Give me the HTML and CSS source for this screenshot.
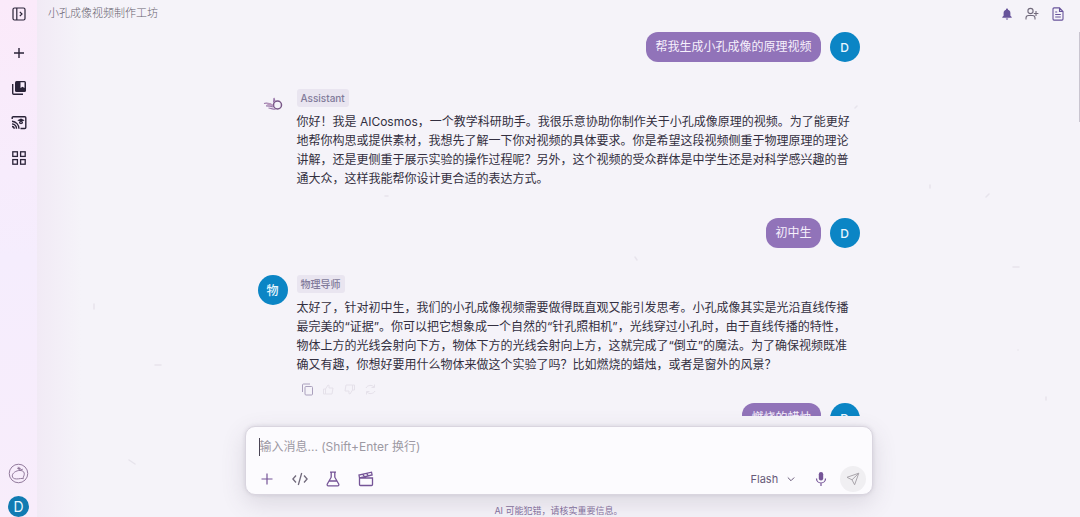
FILE: index.html
```html
<!DOCTYPE html>
<html lang="zh-CN">
<head>
<meta charset="utf-8">
<meta name="viewport" content="width=device-width, initial-scale=1">
<title>小孔成像视频制作工坊</title>
<link rel="stylesheet" href="styles.css">
</head>
<body>
<div class="app">
  <nav class="sidebar">
    <div class="sidebar-group">
      <button class="icon-btn" aria-label="展开侧栏"><svg width="14" height="14" viewBox="0 0 14 14" fill="none" stroke="currentColor" stroke-width="1.2"><rect x="1" y="1" width="12" height="12" rx="1.5"/><path d="M4.8 1v12M7.8 4.8 10 7 7.800 9.200"/></svg></button>
      <button class="icon-btn icon-btn--new" aria-label="新建"><svg width="14" height="14" viewBox="0 0 14 14" fill="none" stroke="currentColor" stroke-width="1.400"><path d="M7 2v10M2 7h10"/></svg></button>
      <button class="icon-btn" aria-label="资料库"><svg width="16" height="16" viewBox="0 0 16 16"><rect x="4" y="1" width="11" height="11" rx="1.5" fill="currentColor"/><path d="M9.500 2.200h4V8l-2-1.300-2 1.300z" fill="#f8edfc"/><path d="M1.700 4v9.300c0 .6.400 1 1 1H12" fill="none" stroke="currentColor" stroke-width="1.400"/></svg></button>
      <button class="icon-btn" aria-label="课堂"><svg width="16" height="16" viewBox="0 0 16 16" fill="none" stroke="currentColor" stroke-width="1.400"><path d="M1.200 4V2.700c0-.6.400-1 1-1h11.600c.6 0 1 .4 1 1v9.800c0 .6-.4 1-1 1H9.500M1 6.200a7.500 7.500 0 0 1 7 7.600M1 8.900a5 5 0 0 1 4.500 4.900M1 11.500a2.300 2.300 0 0 1 2.200 2.300"/><path d="m10 3.400 3.600 1.900L10 7.200 6.400 5.300zM8 6.800v1.400l2 1 2-1V6.800l-2 1z" fill="currentColor" stroke="none"/></svg></button>
      <button class="icon-btn" aria-label="应用"><svg width="14" height="14" viewBox="0 0 14 14" fill="none" stroke="currentColor" stroke-width="1.300"><rect x=".8" y=".8" width="4.600" height="4.600"/><rect x="8.600" y=".8" width="4.600" height="4.600"/><rect x=".8" y="8.600" width="4.600" height="4.600"/><rect x="8.600" y="8.600" width="4.600" height="4.600"/></svg></button>
    </div>
    <div class="sidebar-account">
      <button class="icon-btn icon-btn--mark" aria-label="AICosmos"><svg width="21" height="21" viewBox="0 0 22 22" fill="none" stroke="#8d7597" stroke-width="1"><circle cx="11" cy="11" r="9.700"/><path d="M4.500 13.500c0-3 4-5.700 8-5.700 3.500 0 5 2 4.500 4.500-.4 1.800-1.500 3-1 4.200-1.500-.8-4 .2-7 .2-3 0-4.500-1.200-4.500-3.200zM11.500 7.800l4-1.300M11.500 4v3.500M9.700 5.700h3.600M10.200 4.500l2.600 2.500"/></svg></button>
      <button class="avatar avatar--small" aria-label="账户">D</button>
    </div>
  </nav>

  <main class="main">
    <svg class="particles" width="100%" height="100%" fill="none" stroke="#e7e4ec" stroke-width="1.500" stroke-linecap="round" aria-hidden="true"><path d="m92 460 6 4M118 365h6M57 304v5M949 197l3-3M893 185v3M976 267h6M1009 397v3M981 350h.1M598 257l2 3M818 108l2-2M348 196h3"/></svg>
    <header class="topbar">
      <h1 class="title">小孔成像视频制作工坊</h1>
      <div class="topbar-actions">
        <button class="icon-btn" aria-label="通知"><svg width="12" height="12" viewBox="0 0 12 12" fill="currentColor"><path d="M6 .5c.6 0 1 .4 1 1v.3c1.500.4 2.400 1.600 2.400 3.200v2.800l1.300 1.300v.7H1.300v-.7l1.300-1.300V5c0-1.600.9-2.800 2.400-3.200v-.3c0-.6.4-1 1-1zM4.800 10.400h2.400a1.200 1.200 0 0 1-2.400 0z"/></svg></button>
        <button class="icon-btn icon-btn--grey" aria-label="邀请成员"><svg width="14" height="14" viewBox="0 0 14 14" fill="none" stroke="currentColor" stroke-width="1.100"><circle cx="5.500" cy="4" r="2.600"/><path d="M1 12.500V11c0-1.500 1.200-2.500 2.500-2.500h4C8.800 8.500 10 9.500 10 11v1.500M11 4v5M8.800 6.500h4.600"/></svg></button>
        <button class="icon-btn" aria-label="文档"><svg width="14" height="14" viewBox="0 0 14 14" fill="none" stroke="currentColor" stroke-width="1.100"><path d="M8.500.9H3a1 1 0 0 0-1 1v10.200a1 1 0 0 0 1 1h8a1 1 0 0 0 1-1V4.400zM8.500.9v3.500H12M4.200 5h2M4.200 7.500h5.600M4.200 10h5.600"/></svg></button>
      </div>
    </header>

    <section class="chat">
      <div class="thread">
        <article class="message message--user">
          <p class="bubble">帮我生成小孔成像的原理视频</p>
          <span class="avatar">D</span>
        </article>

        <article class="message message--bot">
          <span class="bot-mark"><svg width="20" height="14" viewBox="0 0 20 14" fill="none" stroke="#9a78aa"><circle cx="14.500" cy="8" r="4" stroke-width="1.500" stroke="#785787"/><path d="M1 6.500c3-1 5-.5 9 2M3 8.800c3 0 5 0 7 1.200M5.500 11c3 .5 5 1.500 7 1.200M10.500 5.500 11 1l1 3.500" stroke-width="1.200"/><path d="m2 6 6 .3 2.500 2.700-5-.5z" fill="#b899bd" stroke="none"/></svg></span>
          <div class="content">
            <span class="name">Assistant</span>
            <p class="text">你好！我是 AICosmos，一个教学科研助手。我很乐意协助你制作关于小孔成像原理的视频。为了能更好地帮你构思或提供素材，我想先了解一下你对视频的具体要求。你是希望这段视频侧重于物理原理的理论讲解，还是更侧重于展示实验的操作过程呢？另外，这个视频的受众群体是中学生还是对科学感兴趣的普通大众，这样我能帮你设计更合适的表达方式。</p>
          </div>
        </article>

        <article class="message message--user">
          <p class="bubble">初中生</p>
          <span class="avatar">D</span>
        </article>

        <article class="message message--bot message--rated">
          <span class="avatar">物</span>
          <div class="content">
            <span class="name">物理导师</span>
            <p class="text">太好了，针对初中生，我们的小孔成像视频需要做得既直观又能引发思考。小孔成像其实是光沿直线传播最完美的“证据”。你可以把它想象成一个自然的“针孔照相机”，光线穿过小孔时，由于直线传播的特性，物体上方的光线会射向下方，物体下方的光线会射向上方，这就完成了“倒立”的魔法。为了确保视频既准确又有趣，你想好要用什么物体来做这个实验了吗？比如燃烧的蜡烛，或者是窗外的风景？</p>
            <div class="feedback">
              <button class="icon-btn" aria-label="复制"><svg width="13" height="13" viewBox="0 0 13 13" fill="none" stroke="currentColor"><rect x="4" y="3.500" width="7.500" height="8.500" rx="1"/><path d="M1.500 9V2a1 1 0 0 1 1-1H9"/></svg></button>
              <button class="icon-btn icon-btn--faint" aria-label="赞"><svg width="13" height="13" viewBox="0 0 13 13" fill="none" stroke="currentColor"><path d="M1.500 6h2v5h-2zM3.500 6 6 2c1.200 0 1.300 1 1 3h4l-1 6H3.500"/></svg></button>
              <button class="icon-btn icon-btn--faint" aria-label="踩"><svg width="13" height="13" viewBox="0 0 13 13" fill="none" stroke="currentColor"><path d="M11.500 7h-2V2h2zM9.500 7 7 11c-1.200 0-1.300-1-1-3H2l1-6h6.500"/></svg></button>
              <button class="icon-btn icon-btn--faint" aria-label="重新生成"><svg width="13" height="13" viewBox="0 0 13 13" fill="none" stroke="currentColor"><path d="M2 5c1.500-3 6-3.500 8-1M10.500 1.500V4.500h-3M11 8c-1.500 3-6 3.500-8 1M2.500 11.500v-3h3"/></svg></button>
            </div>
          </div>
        </article>

        <article class="message message--user">
          <p class="bubble">燃烧的蜡烛</p>
          <span class="avatar">D</span>
        </article>
      </div>
      <span class="scroll-thumb"></span>
    </section>

    <footer class="dock">
      <form class="composer">
        <label class="field">
          <textarea class="input" rows="1" aria-label="消息" placeholder="输入消息... (Shift+Enter 换行)"></textarea>
        </label>
        <div class="tools">
          <div class="tool-group">
            <button type="button" class="icon-btn" aria-label="添加"><svg width="16" height="16" viewBox="0 0 16 16" fill="none" stroke="currentColor" stroke-width="1.200"><path d="M8 2.500v11M2.500 8h11"/></svg></button>
            <button type="button" class="icon-btn icon-btn--grey" aria-label="代码"><svg width="16" height="16" viewBox="0 0 16 16" fill="none" stroke="currentColor" stroke-width="1.300"><path d="M4 4.500.900 8 4 11.500M12 4.500 15.100 8 12 11.500M9.700 2 6.300 14"/></svg></button>
            <button type="button" class="icon-btn" aria-label="实验"><svg width="16" height="16" viewBox="0 0 16 16" fill="none" stroke="currentColor" stroke-width="1.300"><path d="M5 1.200h6M6.200 1.200v5L2.300 13c-.5.900 0 1.800 1 1.800h9.400c1 0 1.500-.9 1-1.800L9.800 6.200v-5M4.500 10h7"/></svg></button>
            <button type="button" class="icon-btn" aria-label="视频"><svg width="16" height="16" viewBox="0 0 16 16" fill="none" stroke="currentColor" stroke-width="1.300"><path d="M1.500 7h13v6.500a1 1 0 0 1-1 1h-11a1 1 0 0 1-1-1zM1.500 7 1 4l12.500-2.800.6 2.700L1.500 7M4.700 3.300l1.800 2.300M8.500 2.400l1.800 2.300"/></svg></button>
          </div>
          <div class="tool-group tool-group--end">
            <label class="model">
              <select class="model-select" aria-label="模型"><option>Flash</option></select>
              <svg width="8" height="8" viewBox="0 0 8 8" fill="none" stroke="currentColor"><path d="m.800 2.500 3.200 3.200 3.200-3.200"/></svg>
            </label>
            <button type="button" class="icon-btn" aria-label="语音"><svg width="14" height="16" viewBox="0 0 14 16" fill="none" stroke="currentColor" stroke-width="1.200"><rect x="4.800" y="1" width="4.400" height="8.500" rx="2.200" fill="currentColor" stroke="none"/><path d="M2.500 7.500a4.500 4.500 0 0 0 9 0M7 12v3"/></svg></button>
            <button class="send" aria-label="发送"><svg width="14" height="14" viewBox="0 0 14 14" fill="none" stroke="currentColor" stroke-linejoin="round"><path d="M12.800 1.200 1 5.300l5 2.500 2.600 5zM6 7.800l6.800-6.600"/></svg></button>
          </div>
        </div>
      </form>
      <p class="notice">AI 可能犯错，请核实重要信息。</p>
    </footer>
  </main>
</div>
</body>
</html>
```

FILE: styles.css
```css
* {
  box-sizing: border-box;
}

body {
  margin: 0;
  font-family: Inter, "Noto Sans CJK SC", sans-serif;
  font-size: 12px;
  line-height: 19px;
  color: #332f40;
  background: #f5f3f9;
}

h1,
p {
  margin: 0;
}

button,
select,
textarea {
  font: inherit;
  color: inherit;
  margin: 0;
  padding: 0;
  border: 0;
  background: none;
}

svg {
  display: block;
  flex: none;
}

.app {
  display: flex;
  height: 100vh;
  overflow: hidden;
}

.icon-btn {
  display: grid;
  place-items: center;
}

.icon-btn--grey {
  color: #716a7c;
}

/* Sidebar */
.sidebar {
  display: flex;
  flex-direction: column;
  justify-content: space-between;
  align-items: center;
  flex: 0 0 37px;
  padding: 6px 0 0;
  color: #2a2338;
  background: linear-gradient(#fbeafa, #f5edfd 50%, #f8edfb);
}

.sidebar-group {
  display: flex;
  flex-direction: column;
  gap: 19px;
}

.sidebar-group .icon-btn {
  width: 37px;
  height: 16px;
}

.icon-btn--new {
  margin-top: 4px;
}

.sidebar-account {
  display: flex;
  flex-direction: column;
  align-items: center;
  gap: 12px;
}

/* Main column */
.main {
  position: relative;
  display: flex;
  flex-direction: column;
  flex: 1;
  min-width: 0;
  background: linear-gradient(90deg, #f1eaf5, #f5f3f9 44px);
}

.particles {
  position: absolute;
  inset: 0;
  pointer-events: none;
}

.topbar {
  display: flex;
  align-items: center;
  justify-content: space-between;
  height: 27px;
  padding: 0 15px 0 11px;
}

.title {
  font-size: 11px;
  font-weight: 300;
  color: #68636f;
}

.topbar-actions {
  display: flex;
  gap: 12px;
  color: #68549b;
}

/* Conversation */
.chat {
  position: relative;
  flex: 1;
  min-height: 0;
  overflow: hidden;
  padding: 5px 16px 0;
}

.thread {
  max-width: 602px;
  margin: 0 auto;
}

.scroll-thumb {
  position: absolute;
  top: 5px;
  right: 0;
  width: 1px;
  height: 90px;
  background: #c9c5d0;
}

.message {
  display: flex;
  gap: 9px;
}

.message--user {
  justify-content: flex-end;
  margin-bottom: 27px;
}

.message--bot {
  margin-bottom: 30px;
}

.message--rated {
  margin-bottom: 7px;
}

.bubble {
  padding: 5px 9px 6px;
  border-radius: 12px;
  color: #f6f0fc;
  background: #9173b9;
}

.avatar {
  display: grid;
  place-items: center;
  flex: none;
  width: 30px;
  height: 30px;
  border-radius: 50%;
  font-weight: 500;
  color: #e9f7ff;
  background: #0b85c5;
}

.avatar--small {
  width: 21px;
  height: 21px;
  font-size: 14px;
  font-weight: 400;
  background: #117bb2;
}

.bot-mark {
  display: grid;
  place-items: center;
  flex: none;
  width: 30px;
  height: 30px;
}

.content {
  flex: 1;
  min-width: 0;
  padding-right: 7px;
}

.name {
  display: block;
  width: fit-content;
  margin-bottom: 5px;
  padding: 0 4px;
  border-radius: 3px;
  font-size: 10px;
  line-height: 18px;
  font-weight: 500;
  color: #817a9a;
  background: #e9e5f0;
}

.feedback {
  display: flex;
  gap: 8px;
  padding: 9px 0 0 4px;
  color: #aaa0bd;
}

.icon-btn--faint {
  color: #e5e1ea;
}

/* Message composer */
.dock {
  padding: 10px 16px 0;
}

.composer {
  position: relative;
  max-width: 628px;
  margin: 0 auto;
  padding: 11px 6px 2px 13px;
  border: 1px solid #d9d5df;
  border-radius: 10px;
  background: #fcfbfe;
  box-shadow: 0 8px 24px rgba(80, 70, 95, 0.16), 0 0 4px rgba(80, 70, 95, 0.14);
}

.field {
  display: block;
  border-left: 1px solid #4a4555;
  height: 18px;
}

.input {
  display: block;
  width: 100%;
  height: 18px;
  line-height: 18px;
  outline: 0;
  resize: none;
  overflow: hidden;
}

.input::placeholder {
  color: #9d99a3;
  opacity: 1;
}

.tools {
  display: flex;
  align-items: center;
  justify-content: space-between;
  padding-top: 10px;
}

.tool-group {
  display: flex;
  align-items: center;
  gap: 17px;
  color: #755497;
}

.tool-group--end {
  gap: 12px;
}

.model {
  display: flex;
  align-items: center;
  gap: 8px;
  margin-right: 7px;
  font-size: 11px;
  color: #675978;
}

.model-select {
  appearance: none;
  outline: 0;
}

.send {
  display: grid;
  place-items: center;
  width: 26px;
  height: 26px;
  border-radius: 50%;
  color: #aaa6ac;
  background: #f0eff2;
}

.notice {
  padding-top: 10px;
  font-size: 9px;
  line-height: 12px;
  text-align: center;
  color: #8672a0;
}
```
